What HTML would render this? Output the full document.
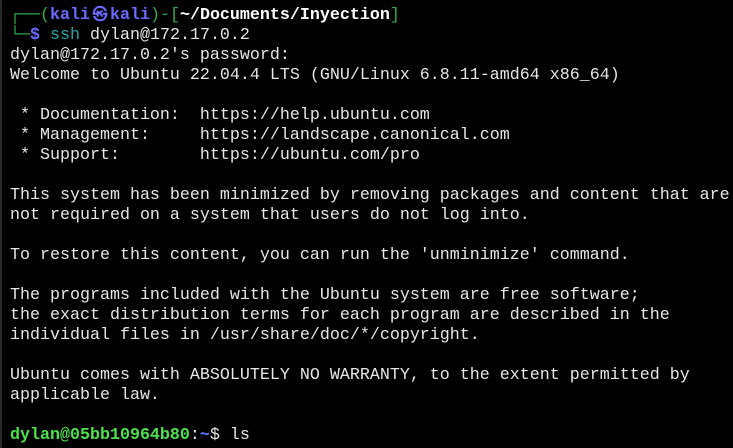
<!DOCTYPE html>
<html><head><style>
html,body{margin:0;padding:0;background:#000;width:733px;height:448px;overflow:hidden}
pre{margin:0;padding:6px 0 0 10px;font-family:"Liberation Mono",monospace;font-size:16.67px;line-height:20px;color:#e6e6e6;white-space:pre}
.g{color:#2fae4a}.b{color:#6a6aff;font-weight:bold}.w{color:#fff;font-weight:bold}.t{color:#1fa6a6}
.lg{color:#4de14d;font-weight:bold}.lb{color:#5a78ff;font-weight:bold}
.sym{display:inline-block;width:20px;font-size:15px;text-align:center;overflow:visible;vertical-align:top}
.strip{position:absolute;left:0;top:0;width:2px;height:448px;background:#2a2a2a}
</style></head><body><div class="strip"></div>
<pre><span class="g">┌──(</span><span class="b">kali<span class="sym">㉿</span>kali</span><span class="g">)-[</span><span class="w">~/Documents/Inyection</span><span class="g">]</span>
<span class="g">└─</span><span class="b">$</span> <span class="t">ssh</span> dylan@172.17.0.2
dylan@172.17.0.2's password:
Welcome to Ubuntu 22.04.4 LTS (GNU/Linux 6.8.11-amd64 x86_64)

 * Documentation:  https://help.ubuntu.com
 * Management:     https://landscape.canonical.com
 * Support:        https://ubuntu.com/pro

This system has been minimized by removing packages and content that are
not required on a system that users do not log into.

To restore this content, you can run the 'unminimize' command.

The programs included with the Ubuntu system are free software;
the exact distribution terms for each program are described in the
individual files in /usr/share/doc/*/copyright.

Ubuntu comes with ABSOLUTELY NO WARRANTY, to the extent permitted by
applicable law.

<span class="lg">dylan@05bb10964b80</span>:<span class="lb">~</span>$ ls
</pre></body></html>
